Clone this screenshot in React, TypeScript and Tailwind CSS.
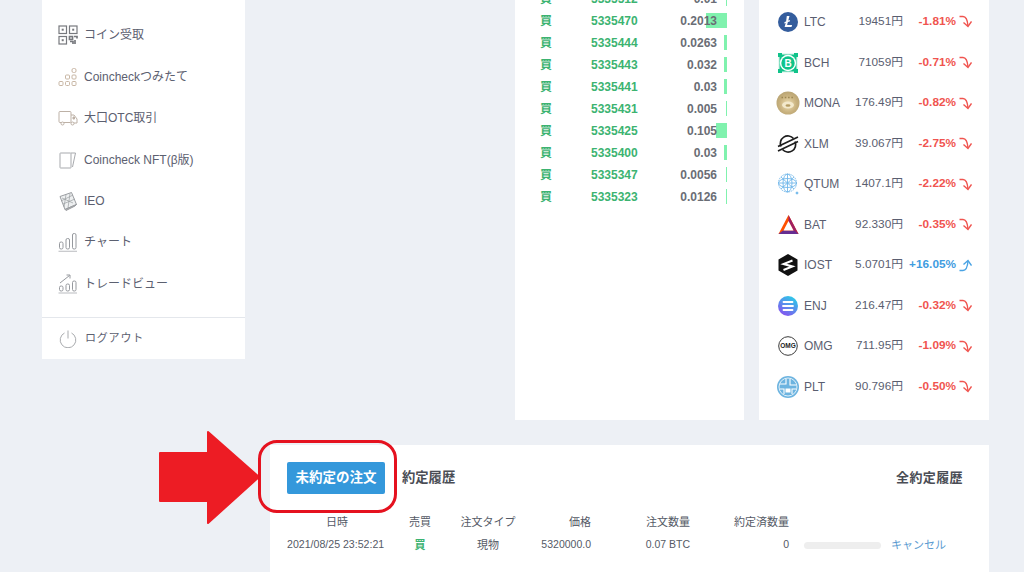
import React from "react";

const font = "font-['Liberation_Sans','Noto_Sans_CJK_JP',sans-serif]";

const QrIcon = () => (
  <svg width="20" height="20" viewBox="0 0 20 20" fill="none" stroke="#77797e" strokeWidth="1.2">
    <rect x="1" y="1" width="7.5" height="7.5" />
    <rect x="11.5" y="1" width="7.5" height="7.5" />
    <rect x="1" y="11.5" width="7.5" height="7.5" />
    <rect x="3.7" y="3.7" width="2" height="2" fill="#77797e" stroke="none" />
    <rect x="14.2" y="3.7" width="2" height="2" fill="#77797e" stroke="none" />
    <rect x="3.7" y="14.2" width="2" height="2" fill="#77797e" stroke="none" />
    <path d="M11.5 11.5h3v3h-3zM16 11.5h3v2M12 16.5h3v2.500M17 15v4" strokeWidth="1.700" />
  </svg>
);
const BlocksIcon = () => (
  <svg width="20" height="20" viewBox="0 0 20 20" fill="none" stroke="#c8b6a4" strokeWidth="1">
    <rect x="1" y="14.500" width="4" height="4" rx="1" />
    <rect x="7.500" y="14.500" width="4" height="4" rx="1" />
    <rect x="14" y="14.500" width="4" height="4" rx="1" />
    <rect x="7.500" y="8" width="4" height="4" rx="1" />
    <rect x="14" y="8" width="4" height="4" rx="1" />
    <rect x="14" y="1.500" width="4" height="4" rx="1.500" />
  </svg>
);
const TruckIcon = () => (
  <svg width="20" height="20" viewBox="0 0 20 20" fill="none" stroke="#bdb1a6" strokeWidth="1">
    <rect x="1" y="3.500" width="12" height="11" rx="1" />
    <path d="M13 7h3l3 4v4h-6" />
    <circle cx="4.500" cy="15.500" r="1.500" fill="#fff" />
    <circle cx="14.500" cy="15.500" r="1.500" fill="#fff" />
    <path d="M15 9h1.500v2H15z" fill="#bdb1a6" />
  </svg>
);
const CardsIcon = () => (
  <svg width="20" height="20" viewBox="0 0 20 20" fill="none" stroke="#a7a9ad" strokeWidth="1">
    <rect x="2" y="3" width="11" height="15" rx="0.500" />
    <path d="M13 3h4.500L14.500 17" />
  </svg>
);
const IeoIcon = () => (
  <svg width="20" height="20" viewBox="0 0 20 20" fill="none" stroke="#9a9da1" strokeWidth="1">
    <path d="M2 5.500 13.500 1.500 18.500 13.500 7 18.500Z" fill="#eef0f1" />
    <path d="M4 7 15 12M8 3.500 6 16M12 2.500 10 17M3 10l12-6M5 13l12-5" strokeWidth="0.700" />
    <path d="M7 18.500 18.500 13.500 17 15 8 19.500Z" fill="#bbb" />
  </svg>
);
const ChartIcon = () => (
  <svg width="20" height="20" viewBox="0 0 20 20" fill="none" stroke="#96999e" strokeWidth="1">
    <rect x="1.500" y="10" width="3.500" height="7" rx="1.500" />
    <rect x="8" y="6.500" width="3.500" height="10.500" rx="1.500" />
    <rect x="14.500" y="1.500" width="3.500" height="15.500" rx="1.500" />
    <path d="M0.500 19.300h18.500" stroke="#c4c6c9" strokeWidth="1.200" />
  </svg>
);
const TradeIcon = () => (
  <svg width="20" height="21" viewBox="0 0 20 21" fill="none" stroke="#96999e" strokeWidth="1">
    <rect x="1.500" y="13" width="3.500" height="5" rx="1.500" />
    <rect x="8" y="11" width="3.500" height="7" rx="1.500" />
    <rect x="14.500" y="8" width="3.500" height="10" rx="1.500" />
    <path d="M2 10 11.500 2.500M8.500 2h3.500v3.500" />
    <path d="M0.500 20h18.500" stroke="#c4c6c9" strokeWidth="1.200" />
  </svg>
);
const PowerIcon = () => (
  <svg width="18" height="18" viewBox="0 0 18 18" fill="none" stroke="#a9abae" strokeWidth="1">
    <path d="M5.500 3a7.800 7.800 0 1 0 7 0" />
    <path d="M9 0.500v8" />
  </svg>
);

const Down = () => (
  <svg width="13" height="13" viewBox="0 0 13 13" fill="none" stroke="#f0544f" strokeWidth="1.400" className="shrink-0">
    <path d="M0.500 1.500h3.500c3 0 4.500 3 5 9.500" />
    <path d="M4.500 7.500 9 11.500 12.500 6.500" />
  </svg>
);
const Up = () => (
  <svg width="13" height="13" viewBox="0 0 13 13" fill="none" stroke="#4aa3e4" strokeWidth="1.400" className="shrink-0">
    <path d="M0.500 11.500h3.500c3 0 4.500-3 5-9.500" />
    <path d="M4.500 5.500 9 1.500 12.500 6.500" />
  </svg>
);

const sideItems = [
  { icon: <QrIcon />, label: "コイン受取", cls: "h-[42px]" },
  { icon: <BlocksIcon />, label: "Coincheckつみたて", cls: "h-[41px]" },
  { icon: <TruckIcon />, label: "大口OTC取引", cls: "h-[42px]" },
  { icon: <CardsIcon />, label: "Coincheck NFT(β版)", cls: "h-[41px]" },
  { icon: <IeoIcon />, label: "IEO", cls: "h-[41px]" },
  { icon: <ChartIcon />, label: "チャート", cls: "h-[42px]" },
  { icon: <TradeIcon />, label: "トレードビュー", cls: "h-[41px]" },
];

const Sidebar = () => (
  <div className="w-[203px] h-[359px] bg-white shrink-0 flex flex-col">
    <div className="pt-[14px] h-[317px] shrink-0">
      {sideItems.map((it) => (
        <div key={it.label} className={`flex items-center pl-[16px] gap-[6px] text-[12px] text-[#5c6070] ${it.cls}`}>
          <span className="w-[20px] h-[20px] flex items-center justify-center">{it.icon}</span>
          <span>{it.label}</span>
        </div>
      ))}
    </div>
    <div className="border-t border-[#e4e7ec] flex-1 flex items-center pl-[17px] gap-[8px] text-[11px] tracking-[0.8px] text-[#5c6070]">
      <PowerIcon />
      <span>ログアウト</span>
    </div>
  </div>
);

const trades = [
  { p: "5335512", q: "0.01", w: "w-[1px]" },
  { p: "5335470", q: "0.2013", w: "w-[21px]" },
  { p: "5335444", q: "0.0263", w: "w-[3px]" },
  { p: "5335443", q: "0.032", w: "w-[3px]" },
  { p: "5335441", q: "0.03", w: "w-[3px]" },
  { p: "5335431", q: "0.005", w: "w-[1px]" },
  { p: "5335425", q: "0.105", w: "w-[11px]" },
  { p: "5335400", q: "0.03", w: "w-[3px]" },
  { p: "5335347", q: "0.0056", w: "w-[1px]" },
  { p: "5335323", q: "0.0126", w: "w-[1px]" },
];

const Trades = () => (
  <div className="w-[229px] h-[420px] bg-white shrink-0 ml-[270px] overflow-hidden">
    <div className="-mt-[12px] pl-[25px] pr-[17px]">
      {trades.map((t) => (
        <div key={t.p} className="relative h-[22px] flex items-center text-[12px] font-bold">
          <span className="w-[51px] text-[#3cb371]">買</span>
          <span className="text-[#3cb371]">{t.p}</span>
          <span className="ml-auto mr-[10px] text-[#6a6d75] relative z-10">{t.q}</span>
          <span className={`absolute right-0 top-[3px] h-[15px] bg-[#80f2ae] ${t.w}`} />
        </div>
      ))}
    </div>
  </div>
);

const Ltc = () => (
  <svg width="20" height="20" viewBox="0 0 20 20">
    <circle cx="10" cy="10" r="10" fill="#345d9d" />
    <path d="M8.800 4h2.700l-1.200 4.600 1.800-.6-.4 1.500-1.800.6-.8 3h5l-.6 2H6.600l1.100-4.200-1.500.5.400-1.400 1.500-.5Z" fill="#fff" />
  </svg>
);
const Bch = () => (
  <svg width="20" height="20" viewBox="0 0 20 20">
    <rect width="20" height="20" fill="#10c38a" />
    <path d="M4 0h12v1.500H4ZM4 18.500h12V20H4ZM0 4h1.500v12H0ZM18.500 4H20v12h-1.500Z" fill="#e8f8f2" />
    <circle cx="10" cy="10" r="8.200" fill="#fff" />
    <circle cx="10" cy="10" r="6.700" fill="#10c38a" />
    <text x="10" y="13.500" fontSize="10" fontWeight="700" fill="#fff" textAnchor="middle" fontFamily="Liberation Sans">B</text>
  </svg>
);
const Mona = () => (
  <svg width="24" height="24" viewBox="0 0 24 24">
    <defs>
      <radialGradient id="mona" cx="0.5" cy="0.55" r="0.6">
        <stop offset="0" stopColor="#efe0b6" />
        <stop offset="0.6" stopColor="#c9b27f" />
        <stop offset="1" stopColor="#b4a070" />
      </radialGradient>
    </defs>
    <circle cx="12" cy="12" r="11.500" fill="url(#mona)" />
    <ellipse cx="12" cy="14" rx="6" ry="3.500" fill="#f3e9cc" />
    <ellipse cx="12" cy="14.500" rx="2.500" ry="1.300" fill="#b59c63" />
    <path d="M5.500 6.500h13" stroke="#9a8552" strokeWidth="1.500" strokeDasharray="1.500 1.800" />
  </svg>
);
const Xlm = () => (
  <svg width="22" height="20" viewBox="0 0 22 20" fill="none" stroke="#1d1d1d" strokeWidth="1.700">
    <path d="M4 12.500a7.500 7.500 0 0 1 12.500-8M18 7.500a7.500 7.500 0 0 1-12.500 8" />
    <path d="M1 12.500 21 3M1 17 21 7.500" />
  </svg>
);
const Qtum = () => (
  <svg width="22" height="22" viewBox="0 0 22 22" fill="none" stroke="#70b7ea" strokeWidth="0.900">
    <circle cx="10.500" cy="10" r="9" strokeDasharray="1.500 0.800" />
    <ellipse cx="10.500" cy="10" rx="4.500" ry="9" />
    <ellipse cx="10.500" cy="10" rx="9" ry="4.500" />
    <path d="M10.500 1v18M1.500 10h18M4 4l13 12M17 4 4 16" />
    <circle cx="20" cy="20" r="1" fill="#70b7ea" />
  </svg>
);
const Bat = () => (
  <svg width="21" height="20" viewBox="0 0 21 20">
    <path d="M10.500 0 20.500 19H.5Z" fill="#ff5000" />
    <path d="M10.500 0 20.500 19 16 16.500 10.500 6Z" fill="#9e1f63" />
    <path d="M.5 19h20L16 15.500H5Z" fill="#662d91" />
    <path d="M10.500 6 15.500 15.500h-10Z" fill="#fff" />
  </svg>
);
const Iost = () => (
  <svg width="20" height="22" viewBox="0 0 20 22">
    <path d="M10 0 19.500 5.500v11L10 22 .5 16.500v-11Z" fill="#111" />
    <path d="M14.500 6.500 5.500 10 14.500 12.500 5.500 16" fill="none" stroke="#fff" strokeWidth="2" />
  </svg>
);
const Enj = () => (
  <svg width="20" height="20" viewBox="0 0 20 20">
    <defs>
      <linearGradient id="enj" x1="0.800" y1="0" x2="0.200" y2="1">
        <stop offset="0" stopColor="#27d0e8" />
        <stop offset="1" stopColor="#8a4df0" />
      </linearGradient>
    </defs>
    <circle cx="10" cy="10" r="10" fill="url(#enj)" />
    <path d="M5.500 6h9M5 10h10M5.500 14h9" stroke="#fff" strokeWidth="1.800" strokeLinecap="round" />
  </svg>
);
const Omg = () => (
  <svg width="20" height="20" viewBox="0 0 20 20">
    <circle cx="10" cy="10" r="9.300" fill="#fff" stroke="#3a3a3a" strokeWidth="1" />
    <text x="10" y="12.300" fontSize="6.500" fontWeight="700" fill="#222" textAnchor="middle" fontFamily="Liberation Sans">OMG</text>
  </svg>
);
const Plt = () => (
  <svg width="22" height="22" viewBox="0 0 22 22" fill="none">
    <circle cx="11" cy="11" r="11" fill="#6db4e0" />
    <circle cx="11" cy="11" r="9" stroke="#fff" strokeWidth="0.800" />
    <path d="M3 8h6V3M13 3v6h6M3 13h4v5M19 13h-4v5" stroke="#fff" strokeWidth="1.100" />
    <path d="M8.500 12.500h5v4h-5Z" fill="#fff" />
  </svg>
);

const coins = [
  { icon: <Ltc />, n: "LTC", p: "19451円", c: "-1.81%", cls: "h-[41px]" },
  { icon: <Bch />, n: "BCH", p: "71059円", c: "-0.71%", cls: "h-[41px]" },
  { icon: <Mona />, n: "MONA", p: "176.49円", c: "-0.82%", cls: "h-[40px]" },
  { icon: <Xlm />, n: "XLM", p: "39.067円", c: "-2.75%", cls: "h-[41px]" },
  { icon: <Qtum />, n: "QTUM", p: "1407.1円", c: "-2.22%", cls: "h-[40px]" },
  { icon: <Bat />, n: "BAT", p: "92.330円", c: "-0.35%", cls: "h-[41px]" },
  { icon: <Iost />, n: "IOST", p: "5.0701円", c: "+16.05%", up: true, cls: "h-[40px]" },
  { icon: <Enj />, n: "ENJ", p: "216.47円", c: "-0.32%", cls: "h-[41px]" },
  { icon: <Omg />, n: "OMG", p: "711.95円", c: "-1.09%", cls: "h-[40px]" },
  { icon: <Plt />, n: "PLT", p: "90.796円", c: "-0.50%", cls: "h-[41px]" },
];

const Coins = () => (
  <div className="w-[230px] h-[420px] bg-white shrink-0 ml-[15px] pt-px">
    {coins.map((c) => (
      <div key={c.n} className={`flex items-center text-[12px] text-[#5a5e70] ${c.cls}`}>
        <span className="w-[45px] shrink-0 pl-[16px] pr-[3px] flex justify-center">{c.icon}</span>
        <span className="w-[40px] shrink-0">{c.n}</span>
        <span className="w-[59px] shrink-0 text-right text-[11.8px]">{c.p}</span>
        <span className={`w-[53px] shrink-0 text-right font-bold text-[11.8px] ${c.up ? "text-[#3f9ce0]" : "text-[#f0544f]"}`}>{c.c}</span>
        <span className="ml-[3px]">{c.up ? <Up /> : <Down />}</span>
      </div>
    ))}
  </div>
);

const cols = "grid grid-cols-[102px_62px_74px_66px_99px_99px_102px_auto] items-center pl-[17px] text-[11px] text-[#555a66]";

const Orders = () => (
  <div className="ml-[270px] mt-[25px] w-[719px] h-[127px] bg-white">
    <div className="flex items-center h-[66px] pl-[17px] pr-[26px]">
      <button className="w-[98px] h-[32px] rounded-[2px] bg-[#3498db] text-white text-[13.5px] font-bold">未約定の注文</button>
      <span className="ml-[17px] text-[13.3px] font-bold text-[#4a4d55]">約定履歴</span>
      <span className="ml-auto text-[13px] tracking-[0.4px] font-bold text-[#4a4d55]">全約定履歴</span>
    </div>
    <div className={`${cols} h-[22px] pt-px`}>
      <span className="text-center pr-[2px]">日時</span>
      <span className="text-center">売買</span>
      <span className="text-center">注文タイプ</span>
      <span className="text-right">価格</span>
      <span className="text-right">注文数量</span>
      <span className="text-right">約定済数量</span>
    </div>
    <div className={`${cols} h-[24px]`}>
      <span className="whitespace-nowrap text-[10.6px]">2021/08/25 23:52:21</span>
      <span className="text-center font-bold text-[#3cb371]">買</span>
      <span className="text-center">現物</span>
      <span className="text-right text-[10.5px]">5320000.0</span>
      <span className="text-right text-[10.5px]">0.07 BTC</span>
      <span className="text-right text-[10.5px]">0</span>
      <span className="ml-[15px] w-[77px] h-[7px] rounded-full bg-[#eeeeee]" />
      <span className="text-[#5b9bd1] text-[11px] whitespace-nowrap">キャンセル</span>
    </div>
  </div>
);

export default function App() {
  return (
    <div className={`relative w-[1024px] h-[572px] overflow-hidden bg-[#edf0f5] ${font}`}>
      <div className="flex items-start h-[420px] pl-[42px]">
        <Sidebar />
        <Trades />
        <Coins />
      </div>
      <Orders />
      <svg width="104" height="96" viewBox="0 0 104 96" className="absolute left-[158px] top-[430px]">
        <path d="M2 23h48V2L101 47 50 93V71H2Z" fill="#ed1c24" stroke="#ed1c24" strokeWidth="2" strokeLinejoin="round" />
      </svg>
      <div className="absolute left-[258px] top-[440px] w-[139px] h-[73px] rounded-[19px] border-[3px] border-[#e5121f]" />
    </div>
  );
}
